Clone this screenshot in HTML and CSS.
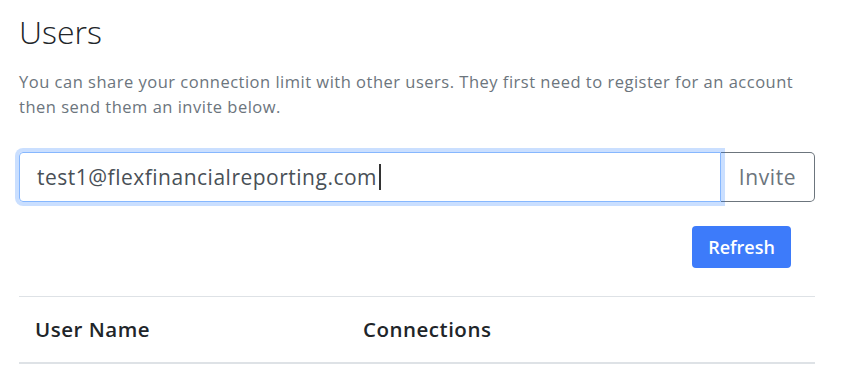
FILE: index.html
```html
<!DOCTYPE html>
<html lang="en">
<head>
    <meta charset="UTF-8">
    <meta name="viewport" content="width=device-width, initial-scale=1.0">
    <title>Users</title>
    <link rel="stylesheet" href="styles.css">
</head>
<body>

    <div class="usersPanel">
        <h1 class="title">Users</h1>
        <p class="intro">You can share your connection limit with other users. They first need to register for an account then send them an invite below.</p>

        <div class="inviteGroup">
            <div class="emailInput">test1@flexfinancialreporting.com<span class="caret"></span></div>
            <button type="button" class="inviteButton">Invite</button>
        </div>

        <div class="refreshRow">
            <button type="button" class="refreshButton">Refresh</button>
        </div>

        <table class="usersTable">
            <thead>
                <tr>
                    <th class="nameCol">User Name</th>
                    <th>Connections</th>
                </tr>
            </thead>
        </table>
    </div>

</body>
</html>
```

FILE: styles.css
```css
body {
    margin: 0;
    background-color: #fff;
    font-family: "Open Sans", "Liberation Sans", sans-serif;
    color: #212529;
}

.usersPanel {
    width: 796px;
    padding: 10px 0 0 19px;
}

.title {
    margin: 0;
    font-size: 32px;
    font-weight: 300;
    line-height: 44px;
}

.intro {
    margin: 15px 0 0 0;
    font-size: 16.5px;
    letter-spacing: 0.5px;
    line-height: 25px;
    color: #6c757d;
}

.inviteGroup {
    display: flex;
    margin-top: 33px;
    height: 50px;
}

.emailInput {
    flex: 1;
    display: flex;
    align-items: center;
    padding: 0 17px;
    font-size: 21px;
    letter-spacing: 0.5px;
    color: #495057;
    border: 1px solid #86b7fe;
    border-radius: 4px 0 0 4px;
    box-shadow: 0 0 0 4px rgba(13, 110, 253, 0.22);
    position: relative;
    z-index: 1;
}

.caret {
    display: inline-block;
    width: 2px;
    height: 26px;
    margin-left: 2px;
    background-color: #333;
}

.inviteButton {
    width: 94px;
    font-family: inherit;
    font-size: 21px;
    letter-spacing: 0.6px;
    color: #6c757d;
    background-color: #fff;
    border: 1px solid #6c757d;
    border-left: none;
    border-radius: 0 5px 5px 0;
}

.refreshRow {
    display: flex;
    justify-content: flex-end;
    margin-top: 24px;
    padding-right: 24px;
}

.refreshButton {
    width: 99px;
    height: 42px;
    font-family: inherit;
    font-size: 18px;
    font-weight: 600;
    color: #fff;
    background-color: #3d7bfa;
    border: none;
    border-radius: 4px;
}

.usersTable {
    width: 100%;
    margin-top: 28px;
    border-collapse: collapse;
}

.usersTable th {
    text-align: left;
    font-size: 20.5px;
    letter-spacing: 0.5px;
    font-weight: 600;
    padding: 18px 16px 19px 16px;
    border-top: 1px solid #dee2e6;
    border-bottom: 2px solid #dee2e6;
}

.nameCol {
    width: 296px;
}
```
